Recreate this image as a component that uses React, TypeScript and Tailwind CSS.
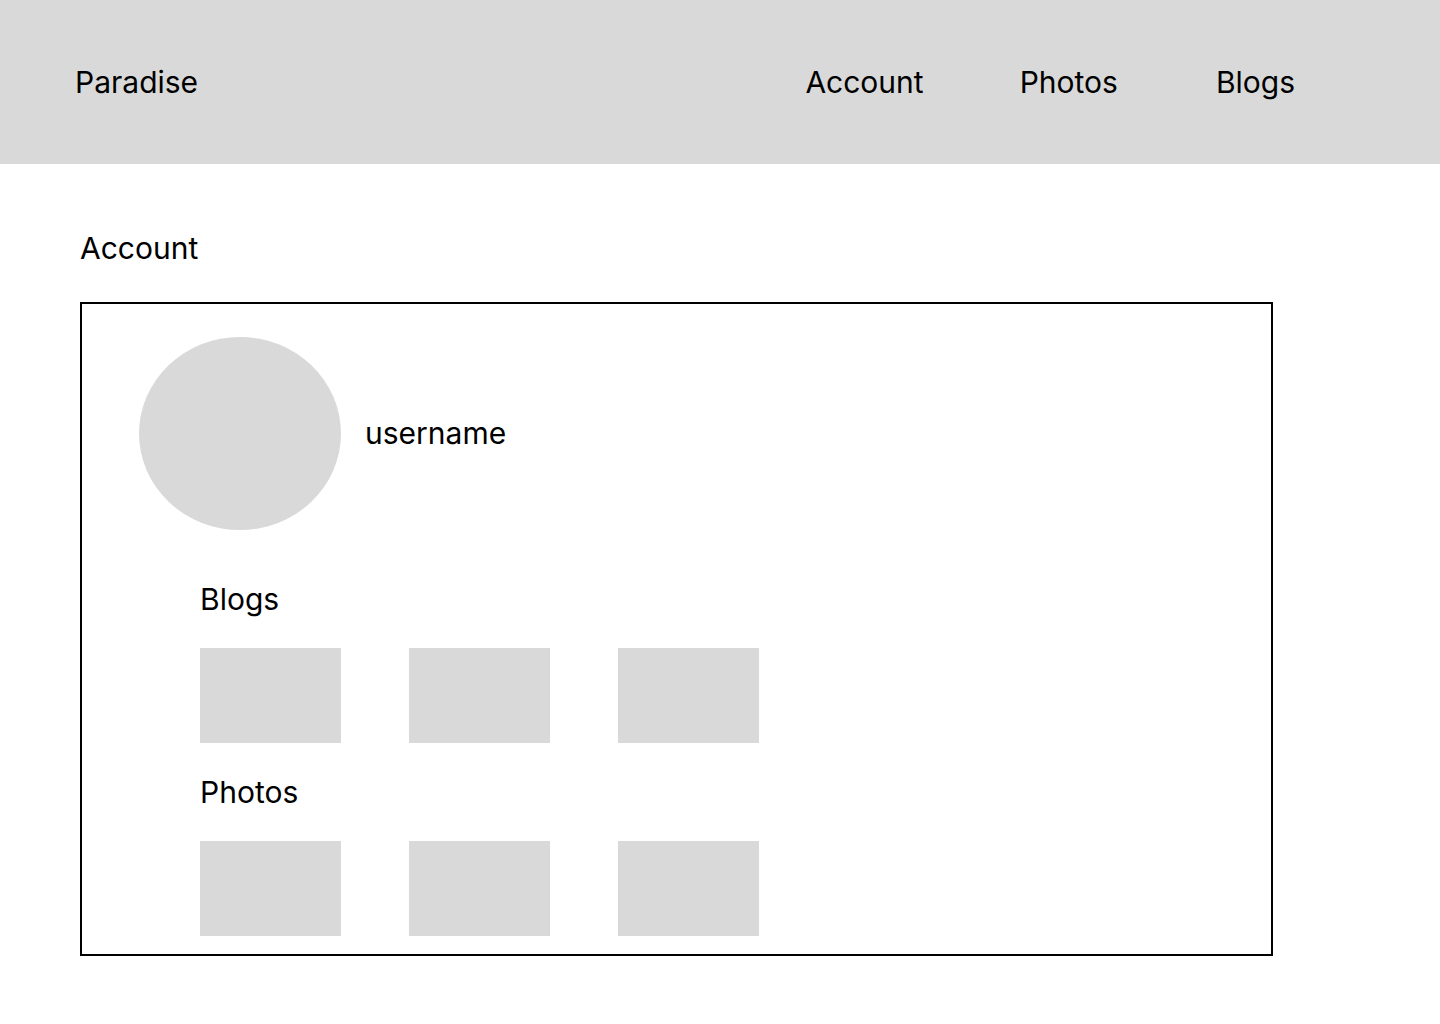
const font = { fontFamily: 'Inter, "Noto Sans", sans-serif' }

function Thumbs() {
  return (
    <div className="flex gap-[68px]">
      {[0, 1, 2].map((i) => (
        <div key={i} className="w-[141px] h-[95px] bg-[#d9d9d9]" />
      ))}
    </div>
  )
}

export default function App() {
  return (
    <div className="min-h-[1024px] bg-white text-black" style={font}>
      <header className="h-[164px] bg-[#d9d9d9] flex items-center justify-between pl-[75px] pr-[145px]">
        <span className="text-[30px] leading-[36px]">Paradise</span>
        <nav className="flex text-[30px] leading-[36px]">
          <a>Account</a>
          <a className="ml-[96px]">Photos</a>
          <a className="ml-[98px]">Blogs</a>
        </nav>
      </header>

      <main className="pl-[80px]">
        <h1 className="mt-[66px] text-[30px] leading-[36px] font-normal">Account</h1>

        <section className="mt-[36px] w-[1193px] h-[654px] border-2 border-black pt-[33px] pl-[57px]">
          <div className="flex items-center gap-[24px]">
            <div className="w-[202px] h-[193px] rounded-[50%] bg-[#d9d9d9]" />
            <span className="text-[30px] leading-[36px] -mt-[2px]">username</span>
          </div>

          <div className="pl-[61px]">
            <h2 className="mt-[51px] text-[30px] leading-[36px]">Blogs</h2>
            <div className="mt-[31px]">
              <Thumbs />
            </div>
            <h2 className="mt-[31px] text-[30px] leading-[36px]">Photos</h2>
            <div className="mt-[31px]">
              <Thumbs />
            </div>
          </div>
        </section>
      </main>
    </div>
  )
}
